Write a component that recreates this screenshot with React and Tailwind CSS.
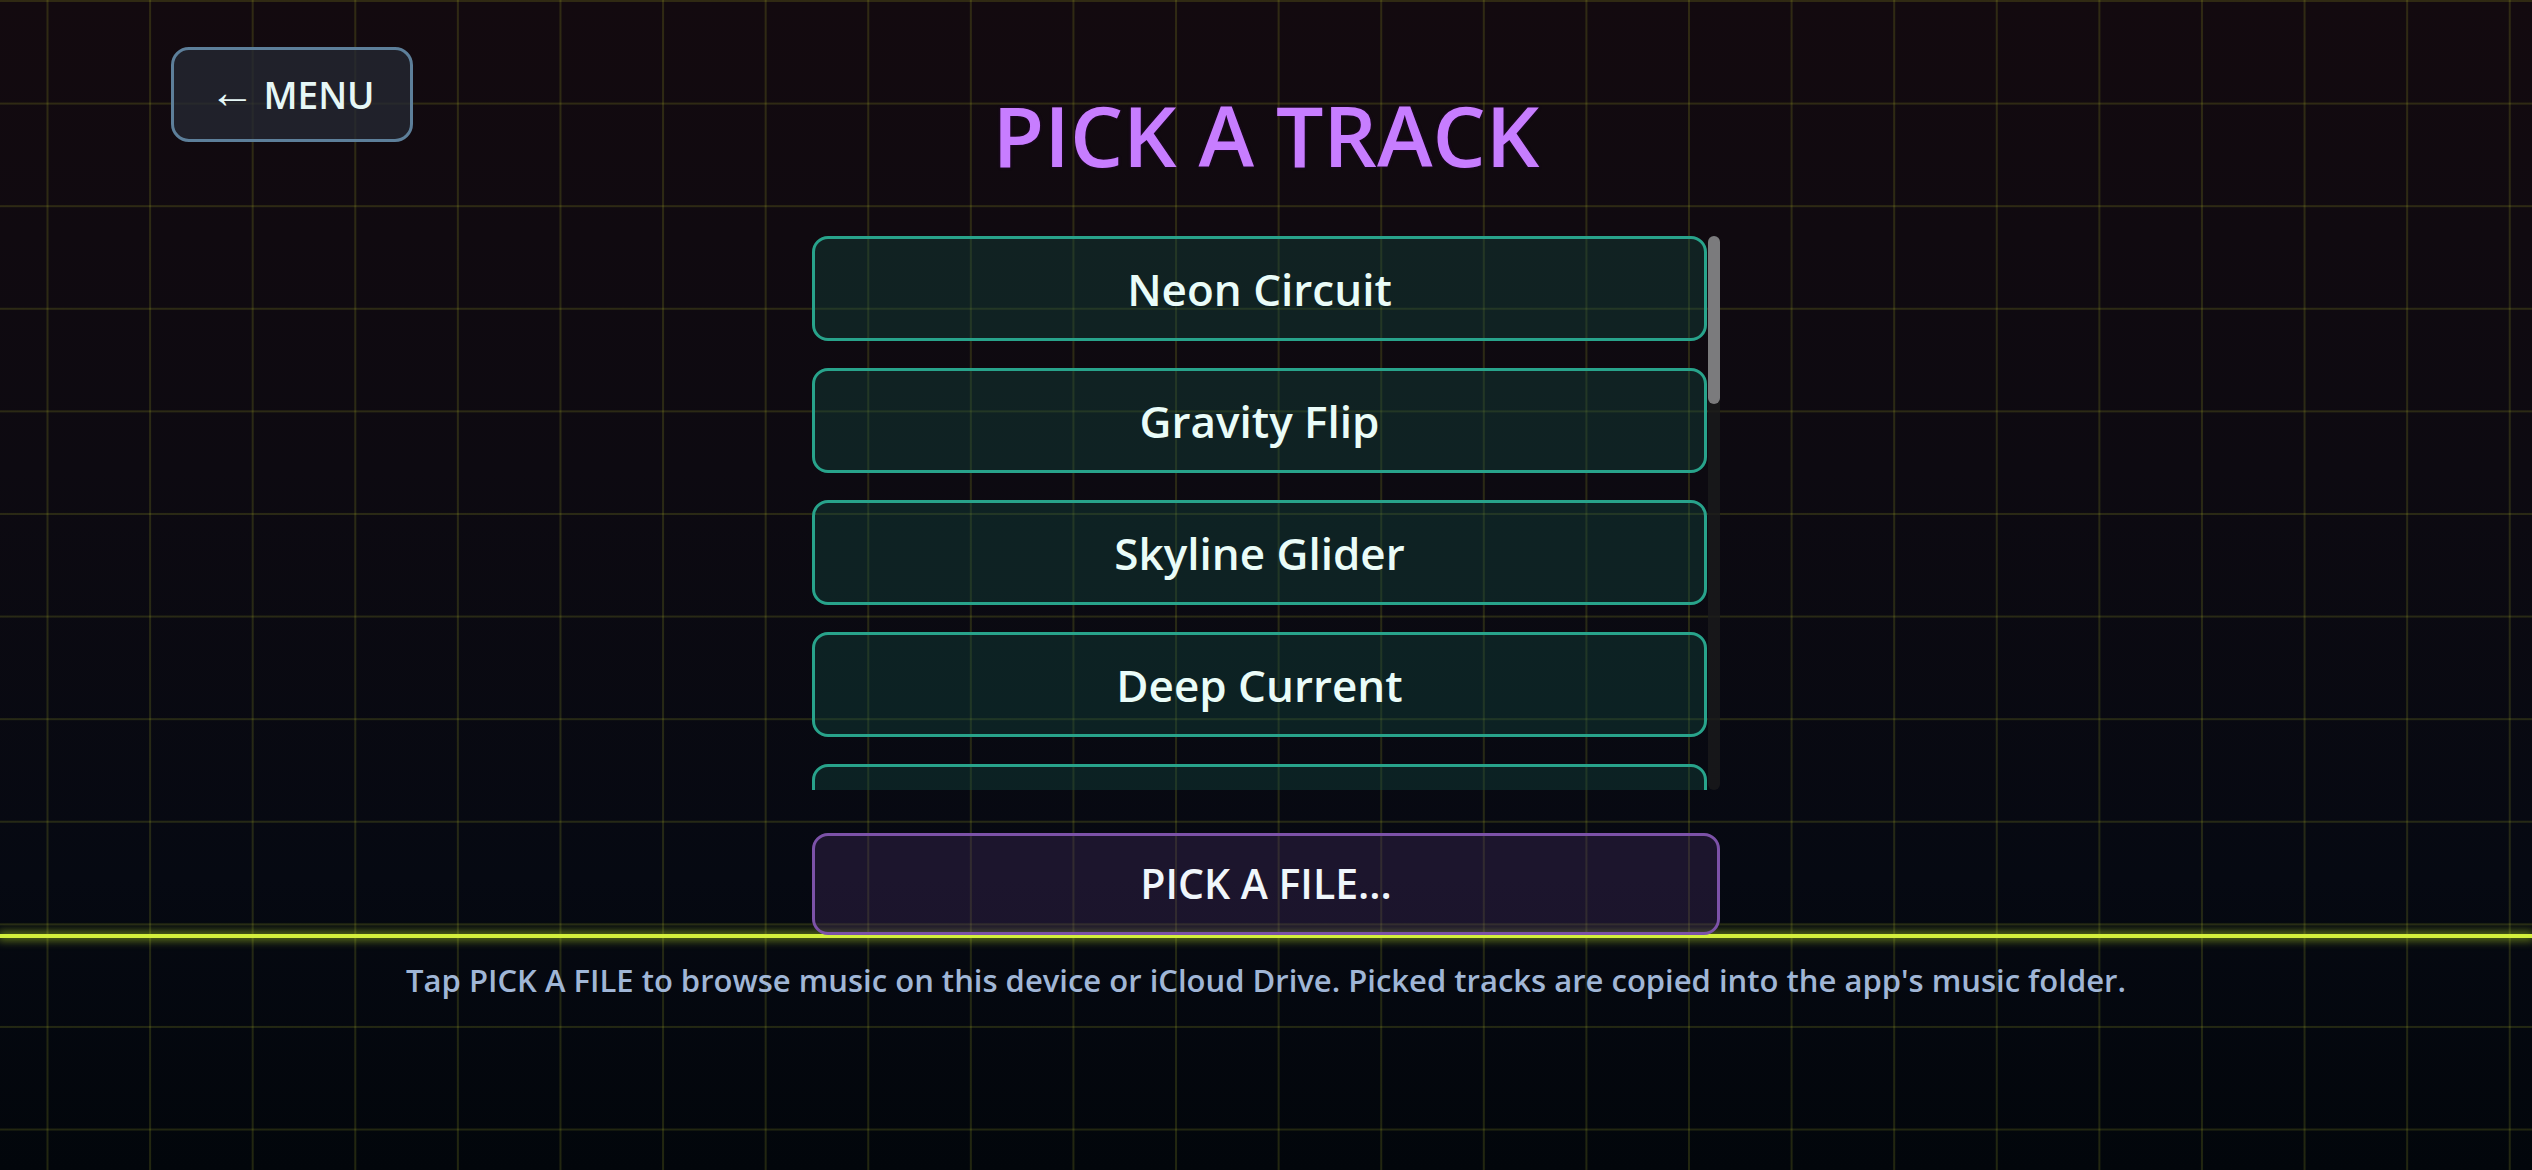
import React from "react";

const TRACKS = [
  "Neon Circuit",
  "Gravity Flip",
  "Skyline Glider",
  "Deep Current",
  "Pulse Runner",
  "Midnight Drive",
  "Solar Drift",
  "Echo Chamber",
  "Static Bloom",
  "Vapor Trail",
  "Hyperlane",
  "Crystal Caves",
  "Afterglow",
  "Night Signal",
];

export default function App() {
  return (
    <div
      className="relative h-[1170px] w-[2532px] overflow-hidden font-['Open_Sans','Noto_Sans',sans-serif] bg-[linear-gradient(to_right,rgba(190,200,40,0.17)_2px,transparent_2px),linear-gradient(to_bottom,rgba(190,200,40,0.17)_2px,transparent_2px),linear-gradient(to_bottom,#130a0f,#0d0a11_40%,#060912_75%,#02060b)] bg-size-[102.6px_102.6px,102.6px_102.6px,100%_100%] bg-position-[46.5px_0px,0px_0px,0px_0px]"
    >
      {/* horizon */}
      <div className="pointer-events-none absolute left-0 right-0 top-[934px] h-[4px] bg-[#d3ef3c] shadow-[0_0_10px_2px_rgba(200,240,40,0.55)]" />

      <button className="absolute left-[171px] top-[47px] flex h-[95px] w-[242px] items-center justify-center gap-[8px] rounded-[18px] border-[3px] border-[#5d7f9a] bg-[#262a34]/75 text-[37px] font-semibold text-[#e6f7f6]">
        <span className="-translate-y-[5px] text-[46px] font-light leading-none">←</span>
        <span>MENU</span>
      </button>

      <div className="relative flex flex-col items-center pt-[93px]">
        <h1 className="h-[84px] text-[84px] font-semibold leading-none text-[#c77dff] [text-shadow:0_0_3px_rgba(60,0,90,0.6)]">
          PICK A TRACK
        </h1>

        <div className="mt-[59px] flex h-[554px] w-[908px] gap-[1px]">
          <div className="flex h-full w-[895px] flex-col gap-[27px] overflow-hidden">
            {TRACKS.map((t) => (
              <button
                key={t}
                className="flex h-[105px] w-full shrink-0 items-center justify-center rounded-[16px] border-[3px] border-[#28a38b] bg-[#145046]/35 text-[44px] font-semibold text-[#eafcf8]"
              >
                {t}
              </button>
            ))}
          </div>
          {/* scrollbar */}
          <div className="flex h-full w-[12px] flex-col rounded-full bg-[#1a1a1c]/80">
            <div className="h-[168px] w-full rounded-full bg-[#7b7b7d]" />
          </div>
        </div>

        <button className="relative mt-[43px] flex h-[102px] w-[908px] items-center justify-center rounded-[16px] border-[3px] border-[#7c52a8] bg-[#50326e]/30 text-[41px] font-semibold text-[#f0f6fb]">
          PICK A FILE...
        </button>

        <p className="mt-[24px] text-[31px] font-semibold leading-[1.4] text-[#a0b6d6]">
          Tap PICK A FILE to browse music on this device or iCloud Drive. Picked tracks are copied into the app's music folder.
        </p>
      </div>
    </div>
  );
}
